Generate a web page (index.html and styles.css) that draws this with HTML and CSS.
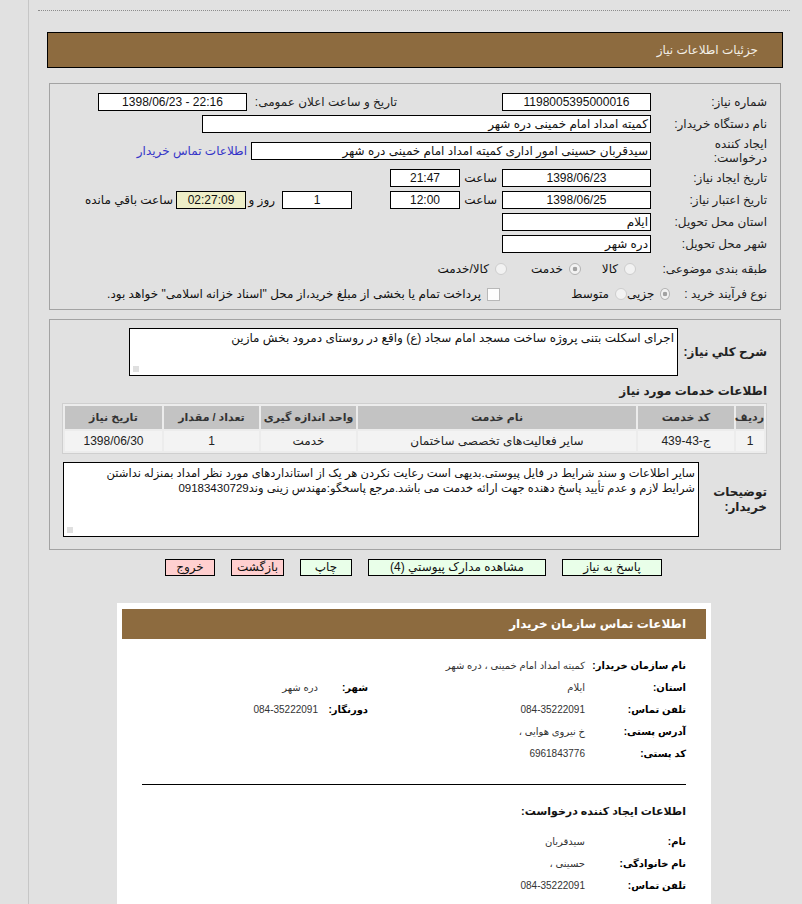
FILE: index.html
```html
<!DOCTYPE html>
<html lang="fa" dir="rtl">
<head>
    <meta charset="UTF-8">
    <title>جزئیات اطلاعات نیاز</title>
    <link rel="stylesheet" href="styles.css">
</head>
<body>
<div class="frame">
    <div class="dots"></div>

    <div class="titlebar">جزئیات اطلاعات نیاز</div>

    <div class="panel panel-main">
        <div class="row">
            <span class="lbl">شماره نیاز:</span>
            <span class="box w149 center">1198005395000016</span>
            <span class="lbl-pub">تاریخ و ساعت اعلان عمومی:</span>
            <span class="box w149 center ltr">1398/06/23 - 22:16</span>
        </div>
        <div class="row">
            <span class="lbl">نام دستگاه خریدار:</span>
            <span class="box w449">کمیته امداد امام خمینی دره شهر</span>
        </div>
        <div class="row row-tall">
            <span class="lbl lbl-2line">ایجاد کننده<br>درخواست:</span>
            <span class="box w400">سیدقربان  حسینی امور اداری کمیته امداد امام خمینی دره شهر</span>
            <a class="contact-link" href="#">اطلاعات تماس خریدار</a>
        </div>
        <div class="row">
            <span class="lbl">تاریخ ایجاد نیاز:</span>
            <span class="box w149 center">1398/06/23</span>
            <span class="hour">ساعت</span>
            <span class="box w70 center">21:47</span>
        </div>
        <div class="row">
            <span class="lbl">تاریخ اعتبار نیاز:</span>
            <span class="box w149 center">1398/06/25</span>
            <span class="hour">ساعت</span>
            <span class="box w70 center">12:00</span>
            <span class="box w70 center days">1</span>
            <span class="day-and">روز و</span>
            <span class="box w70 center timer">02:27:09</span>
            <span class="remain">ساعت باقي مانده</span>
        </div>
        <div class="row">
            <span class="lbl">استان محل تحویل:</span>
            <span class="box w149">ایلام</span>
        </div>
        <div class="row">
            <span class="lbl">شهر محل تحویل:</span>
            <span class="box w149">دره شهر</span>
        </div>
        <div class="row row-cat">
            <span class="lbl lbl-cat">طبقه بندی موضوعی:</span>
            <span class="opt opt-kala"><i class="radio"></i>کالا</span>
            <span class="opt opt-khedmat"><i class="radio checked"></i>خدمت</span>
            <span class="opt"><i class="radio"></i>کالا/خدمت</span>
        </div>
        <div class="row">
            <span class="lbl lbl-proc">نوع فرآیند خرید :</span>
            <span class="opt opt-jozi"><i class="radio checked"></i>جزیی</span>
            <span class="opt opt-motavaset"><i class="radio"></i>متوسط</span>
            <span class="opt"><i class="check"></i>پرداخت تمام یا بخشی از مبلغ خرید،از محل "اسناد خزانه اسلامی" خواهد بود.</span>
        </div>
    </div>

    <div class="panel panel-desc">
        <div class="desc-row">
            <span class="lbl-bold lbl-desc">شرح کلي نیاز:</span>
            <div class="textbox desc-box">اجرای اسکلت بتنی پروژه ساخت مسجد امام سجاد (ع) واقع در روستای دمرود بخش مازین</div>
        </div>

        <div class="section-title">اطلاعات خدمات مورد نیاز</div>

        <table class="services">
            <colgroup>
                <col class="c-idx">
                <col class="c-code">
                <col class="c-name">
                <col class="c-unit">
                <col class="c-qty">
                <col class="c-date">
            </colgroup>
            <thead>
                <tr>
                    <th>ردیف</th>
                    <th>کد خدمت</th>
                    <th>نام خدمت</th>
                    <th>واحد اندازه گیری</th>
                    <th>تعداد / مقدار</th>
                    <th>تاریخ نیاز</th>
                </tr>
            </thead>
            <tbody>
                <tr>
                    <td>1</td>
                    <td>ج-43-439</td>
                    <td>سایر فعالیت‌های تخصصی ساختمان</td>
                    <td>خدمت</td>
                    <td>1</td>
                    <td>1398/06/30</td>
                </tr>
            </tbody>
        </table>

        <div class="desc-row notes-row">
            <span class="lbl-bold lbl-notes">توضیحات<br>خریدار:</span>
            <div class="textbox notes-box">سایر اطلاعات و سند شرایط در فایل پیوستی.بدیهی است رعایت نکردن هر یک از استانداردهای مورد نظر امداد بمنزله نداشتن<br>شرایط لازم و عدم تأیید پاسخ دهنده جهت ارائه خدمت می باشد.مرجع پاسخگو:مهندس زینی وند09183430729</div>
        </div>
    </div>

    <div class="actions">
        <span class="btn btn-go">پاسخ به نیاز</span>
        <span class="btn btn-go btn-docs">مشاهده مدارک پیوستي (4)</span>
        <span class="btn btn-go btn-print">چاپ</span>
        <span class="btn btn-back">بازگشت</span>
        <span class="btn btn-back btn-exit">خروج</span>
    </div>

    <div class="card">
        <div class="card-title">اطلاعات تماس سازمان خریدار</div>

        <div class="info info-org">
            <b>نام سازمان خریدار:</b><span>کمیته امداد امام خمینی ، دره شهر</span><b></b><span></span>
            <b>استان:</b><span>ایلام</span><b>شهر:</b><span>دره شهر</span>
            <b>تلفن تماس:</b><span>084-35222091</span><b>دورنگار:</b><span>084-35222091</span>
            <b>آدرس پستی:</b><span>خ نیروی هوایی ،</span><b></b><span></span>
            <b>کد پستی:</b><span>6961843776</span><b></b><span></span>
        </div>

        <hr class="sep">

        <div class="info-title">اطلاعات ایجاد کننده درخواست:</div>

        <div class="info info-person">
            <b>نام:</b><span>سیدقربان</span><b></b><span></span>
            <b>نام خانوادگی:</b><span>حسینی ،</span><b></b><span></span>
            <b>تلفن تماس:</b><span>084-35222091</span><b></b><span></span>
        </div>
    </div>
</div>
</body>
</html>
```

FILE: styles.css
```css
body {
    margin: 0;
    background-color: #e1e1e1;
    font-family: "Liberation Sans", "DejaVu Sans", sans-serif;
    font-size: 12px;
    color: #111;
}

.frame {
    direction: rtl;
    margin-left: 28px;
    padding-top: 10px;
    border-left: 1px solid #c6c6c6;
    min-height: 894px;
}

.dots {
    margin: 0 12px 0 9px;
    border-top: 1px dotted #8c8c8c;
}

.titlebar {
    margin: 21px 19px 0 18px;
    height: 34px;
    line-height: 34px;
    padding-right: 24px;
    background-color: #8d6b3f;
    border: 1px solid #000;
    color: #f3efe6;
    font-size: 12px;
}

/* group boxes */
.panel {
    margin: 0 21px 0 20px;
    border: 1px solid #a3a3a3;
}

.panel-main {
    margin-top: 15px;
    padding: 7px 13px 4px 8px;
}

.panel-desc {
    margin-top: 9px;
    padding: 8px 13px 12px 13px;
}

.row {
    display: flex;
    align-items: center;
    height: 22px;
    white-space: nowrap;
}

.row-tall {
    height: 32px;
}

.row-cat {
    height: 28px;
}

.lbl {
    flex: none;
    width: 116px;
    color: #222;
}

.lbl-2line {
    line-height: 14px;
}

.lbl-cat {
    width: 131px;
}

.lbl-proc {
    width: 97px;
}

.lbl-pub {
    flex: none;
    width: 150px;
    margin-right: 105px;
    color: #222;
}

.box {
    flex: none;
    box-sizing: border-box;
    height: 18px;
    line-height: 16px;
    padding: 0 2px;
    background-color: #fff;
    border: 1px solid #000;
    overflow: hidden;
}

.w70 { width: 70px; }
.w149 { width: 149px; }
.w400 { width: 400px; }
.w449 { width: 449px; }

.center {
    text-align: center;
}

.ltr {
    direction: ltr;
}

.contact-link {
    margin-right: 4px;
    color: #3535c8;
    text-decoration: none;
}

.hour {
    flex: none;
    width: 37px;
    padding-right: 5px;
}

.days {
    margin-right: 38px;
}

.day-and {
    flex: none;
    width: 29px;
    padding-right: 7px;
}

.timer {
    background-color: #eeeec8;
}

.remain {
    margin-right: 3px;
}

/* radios & checkbox */
.opt {
    display: flex;
    align-items: center;
    flex: none;
}

.opt-kala { width: 55px; }
.opt-khedmat { width: 74px; }
.opt-jozi { width: 43px; }
.opt-motavaset { width: 127px; }

.radio {
    display: inline-block;
    box-sizing: border-box;
    width: 12px;
    height: 12px;
    margin-left: 6px;
    border-radius: 50%;
    border: 1px solid #cdcdcd;
    background-color: #f2f2f2;
}

.radio.checked {
    background: radial-gradient(circle, #a2a2a2 0 2px, #f2f2f2 2.6px);
    border-color: #b4b4b4;
}

.check {
    display: inline-block;
    box-sizing: border-box;
    width: 13px;
    height: 13px;
    margin-left: 6px;
    border: 1px solid #b8b8b8;
    background-color: #fdfdfd;
}

/* description panel */
.desc-row {
    display: flex;
    align-items: center;
}

.lbl-bold {
    flex: none;
    font-weight: bold;
    color: #222;
}

.lbl-desc {
    width: 89px;
}

.lbl-notes {
    width: 68px;
    line-height: 15px;
}

.textbox {
    position: relative;
    box-sizing: border-box;
    padding: 2px 3px;
    background-color: #fff;
    border: 1px solid #000;
    line-height: 15px;
    white-space: nowrap;
    overflow: hidden;
}

.textbox::after {
    content: "";
    position: absolute;
    left: 3px;
    bottom: 3px;
    width: 6px;
    height: 6px;
    background: radial-gradient(circle, #bbb 0 0.6px, transparent 0.8px) 0 0 / 2px 2px;
}

.desc-box {
    width: 549px;
    height: 48px;
}

.notes-row {
    margin-top: 8px;
}

.notes-box {
    width: 636px;
    height: 75px;
    padding-top: 3px;
    font-size: 11.5px;
}

.section-title {
    margin-top: 6px;
    height: 18px;
    line-height: 18px;
    font-weight: bold;
    color: #222;
    margin-bottom: 3px;
}

.services {
    width: 704px;
    table-layout: fixed;
    border: 1px solid #cfcfcf;
    border-spacing: 2px;
    background-color: #ececec;
}

.c-idx { width: 28px; }
.c-code { width: 96px; }
.c-name { width: 278px; }
.c-unit { width: 95px; }
.c-qty { width: 95px; }
.c-date { width: 97px; }

.services th {
    height: 23px;
    padding: 0;
    background-color: #c3c3c3;
    font-size: 11px;
    color: #333;
}

.services td {
    height: 20px;
    padding: 0;
    text-align: center;
    background-color: #f3f3f3;
    color: #222;
}

/* buttons */
.actions {
    display: flex;
    gap: 16px;
    margin-top: 9px;
    padding-right: 140px;
}

.btn {
    box-sizing: border-box;
    height: 17px;
    line-height: 15px;
    width: 100px;
    text-align: center;
    border: 1px solid #000;
    background-color: #e9ffe9;
}

.btn-docs { width: 178px; }
.btn-print { width: 52px; }

.btn-back {
    width: 53px;
    background-color: #ffcfcf;
}

.btn-exit { width: 50px; }

/* contact card */
.card {
    margin: 27px 91px 0 88px;
    padding: 6px 5px 40px;
    background-color: #fff;
}

.card-title {
    height: 30px;
    line-height: 30px;
    padding-right: 20px;
    background-color: #8d6b3f;
    color: #fff;
    font-weight: bold;
    font-size: 12px;
}

.info {
    display: grid;
    grid-template-columns: 101px 217px 50px 1fr;
    grid-auto-rows: 22px;
    align-items: center;
    padding-right: 20px;
}

.info b {
    font-size: 10px;
    color: #000;
    white-space: nowrap;
}

.info span {
    font-size: 10px;
    color: #333;
}

.info-org {
    margin-top: 15px;
}

.info-person {
    margin-top: 8px;
}

.sep {
    margin: 20px 20px 0 20px;
    border: 0;
    border-top: 1px solid #000;
}

.info-title {
    margin-top: 15px;
    height: 22px;
    line-height: 22px;
    padding-right: 20px;
    font-weight: bold;
    font-size: 11px;
}
```
